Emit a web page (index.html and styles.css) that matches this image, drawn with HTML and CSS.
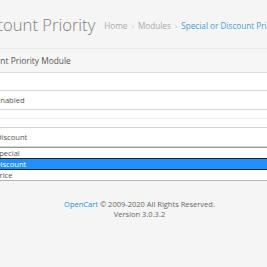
FILE: index.html
```html
<!DOCTYPE html>
<html lang="en">
<head>
    <meta charset="UTF-8">
    <meta name="viewport" content="width=device-width, initial-scale=1.0">
    <title>Special or Discount Priority</title>
    <link rel="stylesheet" href="styles.css">
</head>
<body>
    <div class="page">
        <div class="page-header">
            <h1>Discount Priority</h1>
            <ul class="breadcrumb">
                <li><a href="#">Home</a></li>
                <li><a href="#">Modules</a></li>
                <li><a href="#" class="active">Special or Discount Priority</a></li>
            </ul>
        </div>

        <div class="panel">
            <div class="panel-heading">Discount Priority Module</div>
            <div class="panel-body">
                <div class="form-group">
                    <div class="select">Enabled</div>
                </div>
                <div class="form-group">
                    <div class="select">Discount</div>
                    <ul class="dropdown">
                        <li>Special</li>
                        <li class="selected">Discount</li>
                        <li>Price</li>
                    </ul>
                </div>
            </div>
        </div>

        <footer class="footer">
            <a href="#">OpenCart</a> &copy; 2009-2020 All Rights Reserved.<br>
            Version 3.0.3.2
        </footer>
    </div>
</body>
</html>
```

FILE: styles.css
```css
body {
    margin: 0;
    background-color: #f5f5f5;
    font-family: "Open Sans", sans-serif;
    color: #666;
    overflow: hidden;
}
.page {
    width: 267px;
}
.page-header {
    height: 48px;
    display: flex;
    align-items: center;
    border-bottom: 1px solid #e9e9e9;
    white-space: nowrap;
}
h1 {
    margin: 0 0 0 -28px;
    font-size: 16.6px;
    font-weight: 300;
    color: #808080;
}
.breadcrumb {
    display: flex;
    list-style: none;
    margin: 3px 0 0 9px;
    padding: 0;
    font-size: 8.2px;
}
.breadcrumb li + li:before {
    content: "\203A";
    color: #ccc;
    padding: 0 4px;
}
.breadcrumb a {
    color: #aaa;
    text-decoration: none;
}
.breadcrumb a.active {
    color: #4a9bd1;
}
.panel {
    background-color: #fff;
}
.panel-heading {
    height: 23px;
    line-height: 23px;
    background-color: #f6f6f6;
    border-bottom: 1px solid #dcdcdc;
    font-size: 8.4px;
    color: #555;
    text-indent: -26px;
    white-space: nowrap;
    overflow: hidden;
}
.panel-body {
    padding-top: 17px;
}
.form-group + .form-group {
    border-top: 1px solid #ececec;
    margin-top: 8px;
    padding-top: 8px;
}
.select,
.dropdown {
    margin: 0 -10px;
}
.select,
.dropdown li {
    font-size: 7.6px;
    color: #555;
    text-indent: 5px;
    white-space: nowrap;
    overflow: hidden;
}
.select {
    height: 18px;
    line-height: 18px;
    border: 1px solid #d4d4d4;
}
.dropdown {
    list-style: none;
    padding: 0;
    border-top: 1px solid #9a9a9a;
    border-bottom: 1px solid #b4b4b4;
}
.dropdown li {
    height: 10px;
    line-height: 10px;
}
.dropdown li.selected {
    background-color: #1e90ff;
    color: #fff;
    border-top: 1px solid #222;
    border-bottom: 1px solid #222;
}
.footer {
    padding: 18px 0 0 12px;
    text-align: center;
    font-size: 7.5px;
    line-height: 10px;
    color: #666;
}
.footer a {
    color: #1e91cf;
    text-decoration: none;
}
```
